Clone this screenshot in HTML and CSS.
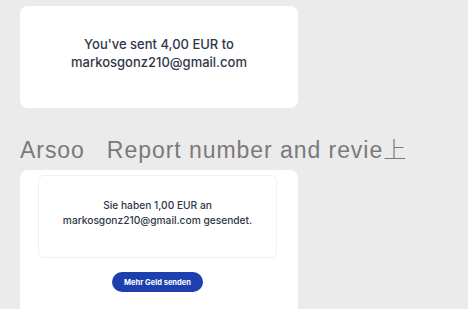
FILE: index.html
```html
<!DOCTYPE html>
<html lang="de">
<head>
    <meta charset="UTF-8">
    <title>Zahlungsbestätigung</title>
    <link rel="stylesheet" href="styles.css">
</head>
<body>
    <div class="page">
        <div class="card card-top">
            <p class="sent-text">You've sent 4,00 EUR to<br>markosgonz210@gmail.com</p>
        </div>

        <div class="heading">Arsoo&nbsp;&nbsp; Report number and revie<span class="cjk">上</span></div>

        <div class="card card-bottom">
            <div class="inner-box">
                <p class="sent-text-small">Sie haben 1,00 EUR an<br>markosgonz210@gmail.com gesendet.</p>
            </div>
            <div class="actions">
                <button class="btn-send">Mehr Geld senden</button>
            </div>
        </div>
    </div>
</body>
</html>
```

FILE: styles.css
```css
:root {
    --background: #ebebeb;
    --card-bg: #ffffff;
    --text-dark: #2f3747;
    --text-grey: #7a7a7a;
    --blue: #1e40af;
}

* {
    margin: 0;
    padding: 0;
    box-sizing: border-box;
}

body {
    background: var(--background);
    font-family: Inter, 'Noto Sans', sans-serif;
    overflow: hidden;
}

.page {
    padding: 6px 0 0 20px;
    width: 298px;
}

.card {
    background: var(--card-bg);
    border-radius: 8px;
}

.card-top {
    height: 102px;
    display: flex;
    align-items: center;
    justify-content: center;
    padding-bottom: 8px;
}

.sent-text {
    text-align: center;
    font-size: 13px;
    font-weight: 500;
    line-height: 18px;
    color: var(--text-dark);
}

.heading {
    font-family: 'Liberation Sans', Arial, 'Noto Sans CJK SC', sans-serif;
    font-size: 23px;
    color: var(--text-grey);
    white-space: nowrap;
    margin: 22px 0 0 0;
    height: 40px;
    line-height: 37px;
    letter-spacing: 0.95px;
}

.cjk {
    font-family: 'Noto Sans CJK SC', sans-serif;
    font-weight: 300;
}

.card-bottom {
    height: 150px;
    padding: 5px 21px 0 18px;
}

.inner-box {
    height: 83px;
    border: 1px solid #f1f1f1;
    border-radius: 6px;
    display: flex;
    align-items: center;
    justify-content: center;
    padding-bottom: 7px;
}

.sent-text-small {
    text-align: center;
    font-size: 10.2px;
    font-weight: 500;
    line-height: 15px;
    color: var(--text-dark);
}

.actions {
    display: flex;
    justify-content: center;
    padding-top: 14px;
}

.btn-send {
    border: none;
    background: var(--blue);
    color: #ffffff;
    width: 91px;
    height: 20px;
    border-radius: 10px;
    font-family: Inter, sans-serif;
    font-size: 7.5px;
    font-weight: 700;
}
```
